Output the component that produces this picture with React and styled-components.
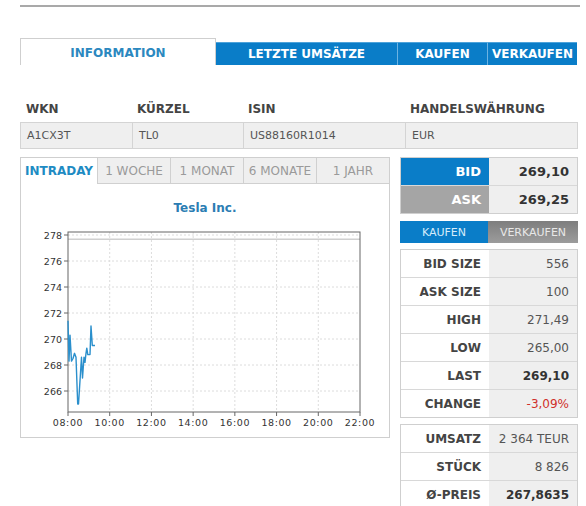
import React from "react";
import styled, { createGlobalStyle } from "styled-components";

const Global = createGlobalStyle`
  html, body { margin: 0; padding: 0; background: #fff; }
  body { font-family: "DejaVu Sans", Verdana, sans-serif; color: #444; }
  * { box-sizing: border-box; }
`;

const Page = styled.div`
  width: 558px;
  margin-left: 20px;
  padding-top: 5px;
`;

const TopRule = styled.div`
  width: 560px;
  height: 2px;
  background: #a9a9a9;
`;

const TabBar = styled.div`
  display: flex;
  align-items: flex-end;
  margin-top: 31px;
  height: 27px;
`;

const InfoTab = styled.div`
  width: 196px;
  height: 27px;
  border: 1px solid #cfcfcf;
  border-bottom: none;
  background: #fff;
  color: #2b88bf;
  font-weight: bold;
  font-size: 12px;
  display: flex;
  align-items: center;
  justify-content: center;
  padding-top: 2px;
`;

const NavTab = styled.div`
  width: ${(p) => p.$w}px;
  height: 23px;
  background: #0a7dc8;
  border-top: 1px solid #4ea3da;
  border-left: ${(p) => (p.$first ? "none" : "1px solid #6cb3e2")};
  color: #fff;
  font-weight: bold;
  font-size: 12px;
  display: flex;
  align-items: center;
  justify-content: center;
`;

const cols = "111px 111px 162px 1fr";

const HeadRow = styled.div`
  display: grid;
  grid-template-columns: ${cols};
  margin-top: 31px;
  height: 26px;
`;

const HeadCell = styled.div`
  padding-left: 6px;
  line-height: 26px;
  font-weight: bold;
  font-size: 12px;
  color: #444;
`;

const ValueRow = styled.div`
  display: grid;
  grid-template-columns: ${cols};
  border: 1px solid #d4d4d4;
  background: #efefef;
  height: 27px;
`;

const ValueCell = styled.div`
  padding-left: 6px;
  line-height: 25px;
  font-size: 11px;
  color: #555;
  border-left: ${(p) => (p.$first ? "none" : "1px solid #d4d4d4")};
`;

const Main = styled.div`
  display: flex;
  gap: 10px;
  margin-top: 8px;
`;

const ChartBox = styled.div`
  width: 370px;
  height: 281px;
  border: 1px solid #cfcfcf;
  display: flex;
  flex-direction: column;
`;

const ChartTabs = styled.div`
  display: flex;
  height: 26px;
`;

const ChartTab = styled.div`
  width: ${(p) => p.$w}px;
  height: 26px;
  display: flex;
  align-items: center;
  justify-content: center;
  font-size: 12px;
  background: ${(p) => (p.$active ? "#fff" : "#efefef")};
  color: ${(p) => (p.$active ? "#1e8bc3" : "#9a9a9a")};
  font-weight: ${(p) => (p.$active ? "bold" : "normal")};
  border-left: ${(p) => (p.$active ? "none" : "1px solid #d0d0d0")};
  border-bottom: ${(p) => (p.$active ? "none" : "1px solid #d0d0d0")};
`;

const ChartTitle = styled.div`
  text-align: center;
  color: #2b7db3;
  font-weight: bold;
  font-size: 12px;
  line-height: 14px;
  padding-top: 17px;
`;

const ChartSvg = styled.svg`
  display: block;
  margin-top: 8px;
`;

const RightCol = styled.div`
  width: 178px;
  display: flex;
  flex-direction: column;
`;

const DataTable = styled.div`
  border: 1px solid #cfcfcf;
  margin-top: ${(p) => p.$mt || 0}px;
`;

const DataRow = styled.div`
  display: grid;
  grid-template-columns: 88px 1fr;
  height: ${(p) => (p.$last ? 27 : 28)}px;
  border-bottom: ${(p) => (p.$last ? "none" : "1px solid #d8d8d8")};
`;

const LabelCell = styled.div`
  display: flex;
  align-items: center;
  justify-content: flex-end;
  padding-right: 8px;
  font-weight: bold;
  font-size: ${(p) => (p.$big ? 13 : 12)}px;
  background: ${(p) =>
    p.$tone === "blue" ? "#0a7dc8" : p.$tone === "gray" ? "#a5a5a5" : "#fff"};
  color: ${(p) => (p.$tone ? "#fff" : "#444")};
`;

const NumCell = styled.div`
  display: flex;
  align-items: center;
  justify-content: flex-end;
  padding-right: 8px;
  background: #efefef;
  font-size: ${(p) => (p.$big ? 13 : 12)}px;
  font-weight: ${(p) => (p.$bold ? "bold" : "normal")};
  color: ${(p) => (p.$red ? "#d0302a" : p.$bold ? "#333" : "#555")};
`;

const TradeBar = styled.div`
  display: grid;
  grid-template-columns: 88px 1fr;
  height: 22px;
  margin-top: 7px;
`;

const TradeButton = styled.div`
  display: flex;
  align-items: center;
  justify-content: center;
  font-size: 11px;
  color: ${(p) => (p.$sell ? "#e8e8e8" : "#d6ecfa")};
  background: ${(p) =>
    p.$sell ? "linear-gradient(#7e7e7e, #9c9c9c)" : "#0a7dc8"};
`;

const navTabs = [
  { t: "LETZTE UMSÄTZE", w: 181 },
  { t: "KAUFEN", w: 90 },
  { t: "VERKAUFEN", w: 90 },
];

const heads = ["WKN", "KÜRZEL", "ISIN", "HANDELSWÄHRUNG"];
const vals = ["A1CX3T", "TL0", "US88160R1014", "EUR"];

const chartTabs = [
  { t: "INTRADAY", w: 76, active: true },
  { t: "1 WOCHE", w: 73 },
  { t: "1 MONAT", w: 73 },
  { t: "6 MONATE", w: 73 },
  { t: "1 JAHR", w: 73 },
];

const stats = [
  { l: "BID SIZE", v: "556" },
  { l: "ASK SIZE", v: "100" },
  { l: "HIGH", v: "271,49" },
  { l: "LOW", v: "265,00" },
  { l: "LAST", v: "269,10", bold: true },
  { l: "CHANGE", v: "-3,09%", red: true },
];

const volume = [
  { l: "UMSATZ", v: "2 364 TEUR" },
  { l: "STÜCK", v: "8 826" },
  { l: "Ø-PREIS", v: "267,8635", bold: true },
];

const PL = 47,
  PR = 339,
  PT = 9,
  PB = 189;
const yOf = (v) => 12 + (278 - v) * 13;
const xs = Array.from({ length: 8 }, (_, k) => PL + (k * (PR - PL)) / 7);
const yVals = [278, 276, 274, 272, 270, 268, 266];
const xLabels = ["08:00", "10:00", "12:00", "14:00", "16:00", "18:00", "20:00", "22:00"];

const series = [
  [47, 271.4], [48, 268.3], [49, 270.3], [50.5, 268.3], [52, 268.5],
  [53.5, 268.9], [55, 268.6], [56.7, 265], [57.5, 265], [60.5, 268.6],
  [61.5, 267], [63, 268.6], [64, 268.2], [65, 268.9], [65.8, 269.3],
  [66.8, 268.8], [69, 268.8], [70, 271], [71.3, 269.5], [74, 269.5],
];

function Chart() {
  const pts = series.map(([x, v]) => `${x},${yOf(v).toFixed(1)}`).join(" ");
  return (
    <ChartSvg width="368" height="213" viewBox="0 0 368 213">
      {yVals.map((v) => (
        <line key={v} x1={PL} x2={PR} y1={yOf(v)} y2={yOf(v)} stroke="#dcdcdc" strokeDasharray="2 2" />
      ))}
      {xs.slice(1, 7).map((x, i) => (
        <line key={i} x1={x} x2={x} y1={PT} y2={PB} stroke="#dcdcdc" strokeDasharray="2 2" />
      ))}
      <line x1={PL} x2={PR} y1={yOf(277.68)} y2={yOf(277.68)} stroke="#b8b8b8" />
      <rect x={PL} y={PT} width={PR - PL} height={PB - PT} fill="none" stroke="#666" />
      {yVals.map((v) => (
        <g key={v}>
          <line x1={PL - 4} x2={PL} y1={yOf(v)} y2={yOf(v)} stroke="#666" />
          <text x={PL - 6} y={yOf(v) + 3.5} textAnchor="end" fontSize="9.5" fill="#333" fontFamily="DejaVu Sans">
            {v}
          </text>
        </g>
      ))}
      {xs.map((x, i) => (
        <g key={i}>
          <line x1={x} x2={x} y1={PB} y2={PB + 4} stroke="#666" />
          <text x={x} y={PB + 14} textAnchor="middle" fontSize="9.5" fill="#333" fontFamily="DejaVu Sans" letterSpacing="0.6">
            {xLabels[i]}
          </text>
        </g>
      ))}
      <polyline points={pts} fill="none" stroke="#2a8fcc" strokeWidth="1.4" strokeLinejoin="round" />
    </ChartSvg>
  );
}

export default function App() {
  return (
    <>
      <Global />
      <Page>
        <TopRule />
        <TabBar>
          <InfoTab>INFORMATION</InfoTab>
          {navTabs.map((n, i) => (
            <NavTab key={n.t} $w={n.w} $first={i === 0}>
              {n.t}
            </NavTab>
          ))}
        </TabBar>
        <HeadRow>
          {heads.map((h) => (
            <HeadCell key={h}>{h}</HeadCell>
          ))}
        </HeadRow>
        <ValueRow>
          {vals.map((v, i) => (
            <ValueCell key={v} $first={i === 0}>
              {v}
            </ValueCell>
          ))}
        </ValueRow>
        <Main>
          <ChartBox>
            <ChartTabs>
              {chartTabs.map((c) => (
                <ChartTab key={c.t} $w={c.w} $active={c.active}>
                  {c.t}
                </ChartTab>
              ))}
            </ChartTabs>
            <ChartTitle>Tesla Inc.</ChartTitle>
            <Chart />
          </ChartBox>
          <RightCol>
            <DataTable>
              <DataRow>
                <LabelCell $tone="blue" $big>BID</LabelCell>
                <NumCell $bold $big>269,10</NumCell>
              </DataRow>
              <DataRow $last>
                <LabelCell $tone="gray" $big>ASK</LabelCell>
                <NumCell $bold $big>269,25</NumCell>
              </DataRow>
            </DataTable>
            <TradeBar>
              <TradeButton>KAUFEN</TradeButton>
              <TradeButton $sell>VERKAUFEN</TradeButton>
            </TradeBar>
            <DataTable $mt={6}>
              {stats.map((s, i) => (
                <DataRow key={s.l} $last={i === stats.length - 1}>
                  <LabelCell>{s.l}</LabelCell>
                  <NumCell $bold={s.bold} $red={s.red}>{s.v}</NumCell>
                </DataRow>
              ))}
            </DataTable>
            <DataTable $mt={6}>
              {volume.map((s, i) => (
                <DataRow key={s.l} $last={i === volume.length - 1}>
                  <LabelCell>{s.l}</LabelCell>
                  <NumCell $bold={s.bold}>{s.v}</NumCell>
                </DataRow>
              ))}
            </DataTable>
          </RightCol>
        </Main>
      </Page>
    </>
  );
}
